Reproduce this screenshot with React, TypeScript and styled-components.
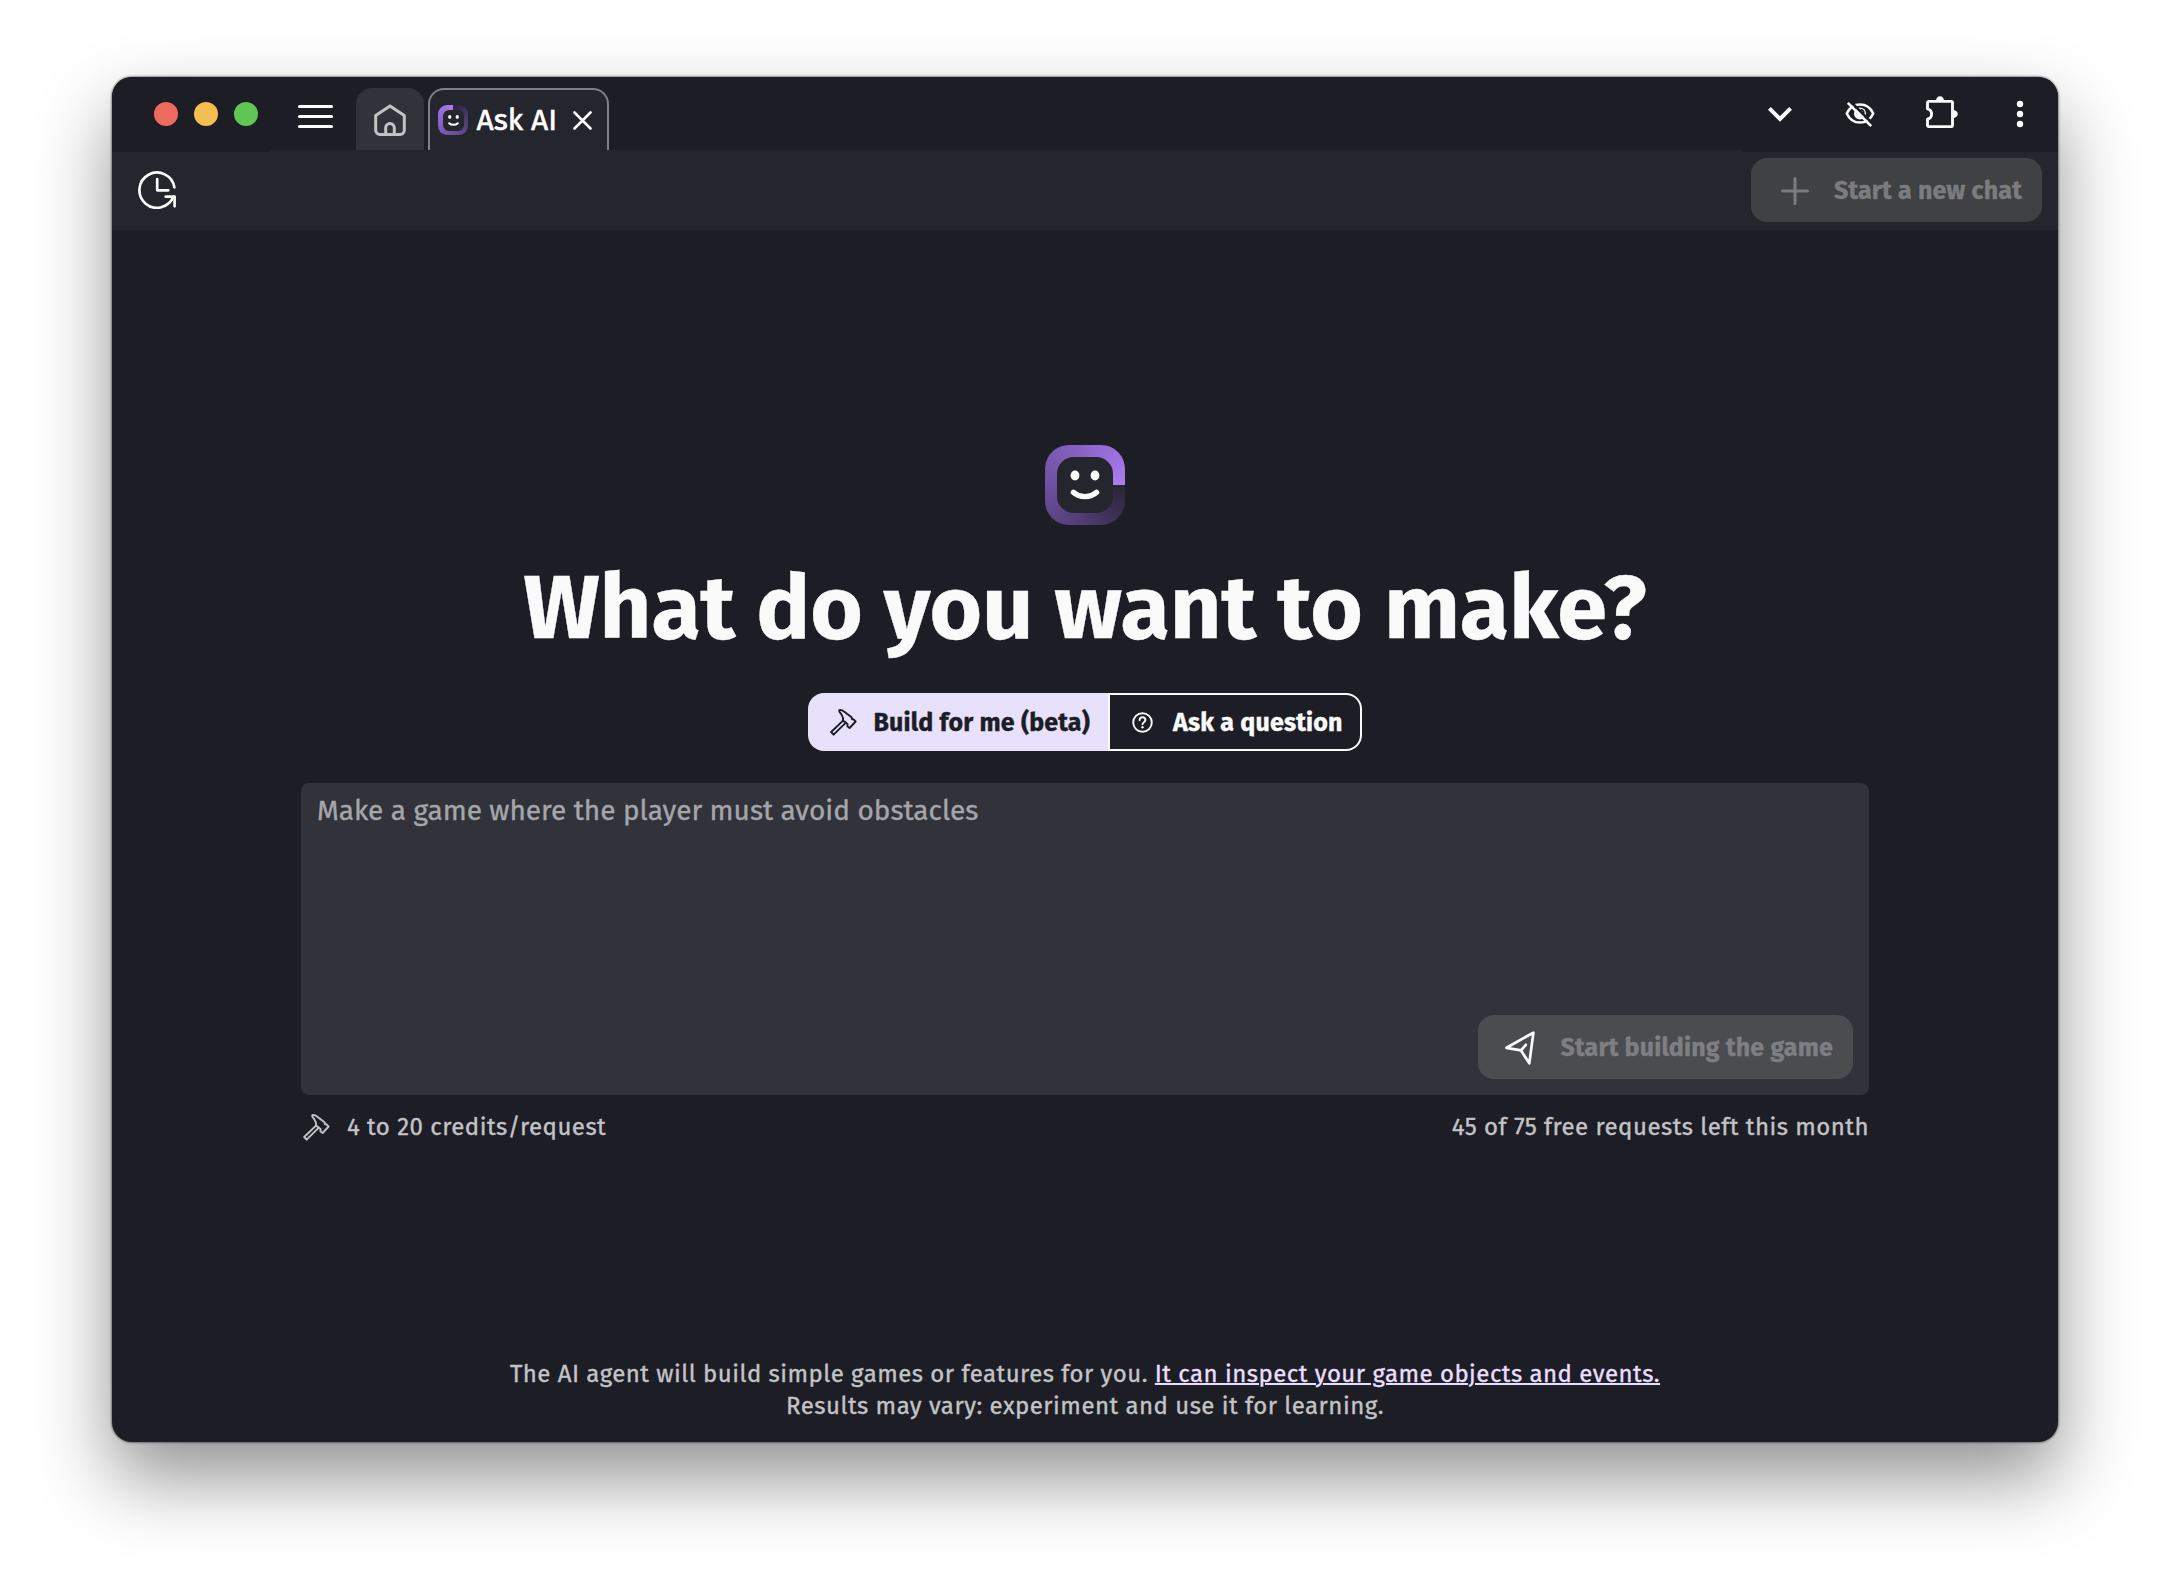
import React from 'react';
import styled, { createGlobalStyle } from 'styled-components';

const GlobalStyle = createGlobalStyle`
  * { box-sizing: border-box; }
  html, body { margin: 0; background: #fff; }
  body {
    font-family: "Fira Sans", "Noto Sans", sans-serif;
    color: #fafafa;
    -webkit-text-stroke: 0.35px currentColor;
  }
  button, textarea { font: inherit; border: 0; margin: 0; padding: 0; outline: none; }
`;

const Desktop = styled.div`
  width: 2170px;
  height: 1590px;
  padding: 77px 112px 0;
  overflow: hidden;
  background: #fff;
`;

const AppWindow = styled.div`
  width: 1946px;
  height: 1365px;
  display: flex;
  flex-direction: column;
  overflow: hidden;
  border-radius: 20px;
  background: #1d1d26;
  box-shadow: 0 36px 76px rgba(0, 0, 0, 0.43), 0 0 2px 1px rgba(0, 0, 0, 0.4);
`;

const TitleBar = styled.header`
  flex: none;
  display: flex;
  height: 75px;
  background: #1d1d26;
`;

const TrafficLights = styled.div`
  display: flex;
  align-items: center;
  gap: 16px;
  width: 158px;
  padding: 0 0 1px 41.5px;
`;

const Light = styled.span<{ $color: string }>`
  width: 24px;
  height: 24px;
  border-radius: 50%;
  background: ${(p) => p.$color};
`;

const TabStrip = styled.nav`
  flex: 1;
  display: flex;
  align-items: flex-end;
  padding-left: 28px;
  border-bottom: 2px solid #25252e;
`;

const MenuButton = styled.button`
  display: flex;
  flex-direction: column;
  gap: 7px;
  width: 35px;
  margin: 0 23px 22.5px 0;
  background: none;
`;

const MenuLine = styled.span`
  height: 3px;
  border-radius: 2px;
  background: #fff;
`;

const HomeTab = styled.button`
  display: flex;
  justify-content: center;
  width: 68px;
  height: 62px;
  margin-right: 4px;
  padding-top: 16px;
  border-radius: 16px 16px 0 0;
  background: #32323b;
`;

const ActiveTab = styled.div`
  display: flex;
  align-items: center;
  width: 181px;
  height: 62px;
  padding: 0 0 0 8px;
  border: 2px solid #808083;
  border-bottom: 0;
  border-radius: 16px 16px 0 0;
  background: #25252e;
`;

const TabTitle = styled.span`
  margin: 0 16px 0 8.5px;
  font-size: 30px;
  line-height: 36px;
  white-space: nowrap;
  color: #fff;
  -webkit-text-stroke-width: 0.6px;
`;

const WindowActions = styled.div`
  display: flex;
  align-items: center;
  width: 316px;
  padding: 0 0 1px 26px;
`;

const ActionSlot = styled.span<{ $width: number; $gap?: number; $lift?: number }>`
  display: flex;
  justify-content: center;
  width: ${(p) => p.$width}px;
  margin-right: ${(p) => p.$gap || 0}px;
  margin-bottom: ${(p) => p.$lift || 0}px;
`;

const Toolbar = styled.div`
  flex: none;
  display: flex;
  align-items: center;
  justify-content: space-between;
  height: 78px;
  padding: 0 16px 2px 26px;
  background: #25252e;
`;

const RaisedButton = styled.button<{ $bg: string; $fg: string; $gap: number; $left: number; $right: number }>`
  display: flex;
  align-items: center;
  gap: ${(p) => p.$gap}px;
  height: 64px;
  padding: 1px ${(p) => p.$right}px 0 ${(p) => p.$left}px;
  border-radius: 16px;
  background: ${(p) => p.$bg};
  color: ${(p) => p.$fg};
  font-size: 25px;
  font-weight: 700;
  line-height: 32px;
  letter-spacing: 0.18px;
  white-space: nowrap;
`;

const Main = styled.main`
  flex: 1;
  display: flex;
  flex-direction: column;
  align-items: center;
  padding: 215px 0 20px;
`;

const LogoFrame = styled.div<{ $size: number; $from: number }>`
  flex: none;
  width: ${(p) => p.$size}px;
  height: ${(p) => p.$size}px;
  padding: ${(p) => p.$size * 0.15}px;
  border-radius: 30%;
  background: conic-gradient(
    from ${(p) => p.$from}deg,
    #2a2535 0deg,
    #352c49 30deg,
    #4e3c71 90deg,
    #6f50a0 180deg,
    #8a64c8 270deg,
    #ab7df0 360deg
  );
`;

const LogoFace = styled.div`
  width: 100%;
  height: 100%;
  border-radius: 30%;
  background: #25252e;
  svg { display: block; width: 100%; height: 100%; }
`;

const Heading = styled.h1`
  margin: 29px 0 0;
  font-size: 90px;
  font-weight: 700;
  line-height: 108px;
  letter-spacing: -0.14px;
  white-space: nowrap;
  color: #fafafa;
`;

const ModeSwitch = styled.div`
  display: flex;
  height: 58px;
  margin-top: 31px;
`;

const Mode = styled.button<{ $active?: boolean }>`
  display: flex;
  align-items: center;
  gap: ${(p) => (p.$active ? 16.5 : 20)}px;
  width: ${(p) => (p.$active ? 300 : 254)}px;
  padding: 1px 0 0 ${(p) => (p.$active ? 20 : 22)}px;
  border: 2px solid ${(p) => (p.$active ? '#e8e1fc' : '#fafafa')};
  border-right-width: ${(p) => (p.$active ? 0 : 2)}px;
  border-radius: ${(p) => (p.$active ? '16px 0 0 16px' : '0 16px 16px 0')};
  background: ${(p) => (p.$active ? '#e8e1fc' : '#1d1d26')};
  color: ${(p) => (p.$active ? '#1d1d26' : '#fafafa')};
  font-size: 25px;
  font-weight: 700;
  line-height: 32px;
  letter-spacing: 0.18px;
  white-space: nowrap;
`;

const Composer = styled.div`
  display: flex;
  flex-direction: column;
  width: 1568px;
  height: 312px;
  margin-top: 32px;
  padding: 11px 16px 16px 16px;
  border-radius: 8px;
  background: #32323b;
`;

const Prompt = styled.textarea`
  flex: 1;
  resize: none;
  background: none;
  font-size: 28px;
  line-height: 34px;
  &::placeholder { color: #a6a6aa; opacity: 1; }
`;

const ComposerActions = styled.div`
  display: flex;
  justify-content: flex-end;
`;

const UsageRow = styled.div`
  display: flex;
  justify-content: space-between;
  width: 1568px;
  margin-top: 16px;
  font-size: 24px;
  line-height: 32px;
  letter-spacing: 0.48px;
  color: #c3c3c6;
`;

const Credits = styled.span`
  display: flex;
  align-items: center;
  gap: 17px;
  padding-left: 2px;
`;

const Disclaimer = styled.p`
  margin: auto 0 0;
  text-align: center;
  font-size: 24px;
  line-height: 32px;
  letter-spacing: 0.48px;
  color: #c3c3c6;
`;

const DocLink = styled.a`
  color: #e8dffe;
  text-decoration: underline;
  text-decoration-thickness: 2px;
  -webkit-text-stroke-color: #e8dffe;
`;

function AiLogo({ size, from }: { size: number; from: number }) {
  return (
    <LogoFrame $size={size} $from={from}>
      <LogoFace>
        <svg viewBox="0 0 56 56" fill="#fafafa">
          <ellipse cx="18" cy="18.5" rx="4.4" ry="5" />
          <ellipse cx="38" cy="18.5" rx="4.4" ry="5" />
          <path d="M16.4 35.3C22.5 41 33.5 41 39.6 35.3" fill="none" stroke="#fafafa" strokeWidth="5.4" strokeLinecap="round" />
        </svg>
      </LogoFace>
    </LogoFrame>
  );
}

function HammerIcon() {
  return (
    <svg width="27" height="27" viewBox="0 0 27 27" fill="none" stroke="currentColor" strokeWidth="1.9" strokeLinejoin="round" strokeLinecap="round">
      <path d="M9.3 1.2C11 .7 12.6 1.3 14 2.5L21.5 8.2L22 10.3L23.3 10.2L25.6 12.5L19.6 19L17.4 17.2L17.6 15.3L15.6 13.4L13 11.6C13.5 8.3 12.6 6.3 9.3 2.6Z" />
      <path d="M13 11.6L1.2 23L3.6 25.7L15.6 13.8" />
    </svg>
  );
}

function HomeIcon() {
  return (
    <svg width="32" height="32" viewBox="0 0 32 32" fill="none" stroke="#c3c3c6" strokeWidth="3" strokeLinejoin="round">
      <path d="M1.7 11.6L16 1.9L30.3 11.6V26.3A4.2 4.2 0 0 1 26.1 30.5H5.9A4.2 4.2 0 0 1 1.7 26.3Z" />
      <path d="M11.7 30V23.8A4.3 4.3 0 0 1 20.3 23.8V30" />
    </svg>
  );
}

function CloseIcon() {
  return (
    <svg width="19" height="19" viewBox="0 0 19 19" stroke="#fff" strokeWidth="2.6" strokeLinecap="round">
      <path d="M1.5 1.5L17.5 17.5M17.5 1.5L1.5 17.5" />
    </svg>
  );
}

function HistoryIcon() {
  return (
    <svg width="39" height="38" viewBox="0 0 39 38" fill="none" stroke="#fafafa" strokeWidth="2.7" strokeLinejoin="round" strokeLinecap="round">
      <path d="M36.4 16.4A17.6 17.6 0 1 0 35.4 25.6" />
      <path d="M27.7 25.7H36.6V35.3" />
      <path d="M19.2 8.2V19.3H30.3" />
    </svg>
  );
}

function ChevronIcon() {
  return (
    <svg width="24" height="15" viewBox="0 0 24 15" fill="none" stroke="#fafafa" strokeWidth="4">
      <path d="M1.4 1.4L12 12L22.6 1.4" />
    </svg>
  );
}

function EyeOffIcon() {
  return (
    <svg width="30" height="27" viewBox="0 0 30 27" fill="none" stroke="#fafafa">
      <path d="M1.8 12.4C4.4 6.6 9.2 3.4 15 3.4S25.6 6.6 28.2 12.4C25.6 18.2 20.8 21.6 15 21.6S4.4 18.2 1.8 12.4Z" strokeWidth="2.5" />
      <circle cx="15" cy="12.6" r="6" fill="#fafafa" stroke="none" />
      <path d="M15.6 8.6A4 4 0 0 1 19 12.2" stroke="#1d1d26" strokeWidth="1.5" />
      <path d="M5 0L28.5 23.5" stroke="#1d1d26" strokeWidth="2.6" />
      <path d="M2.8 1.8L26.2 25.2" strokeWidth="2.6" />
    </svg>
  );
}

function PuzzleIcon() {
  return (
    <svg width="32" height="32" viewBox="0 0 32 32" fill="none">
      <path d="M1.5 12.8V6.8A1.4 1.4 0 0 1 2.9 5.4H25.1A1.4 1.4 0 0 1 26.5 6.8V29.2A1.4 1.4 0 0 1 25.1 30.6H2.9A1.4 1.4 0 0 1 1.5 29.2V23.2C4 22.6 5.6 20.6 5.6 18S4 13.4 1.5 12.8Z" stroke="#fafafa" strokeWidth="2.9" strokeLinejoin="round" />
      <path d="M10 5A4 4.8 0 0 1 18 5ZM27 14A4.8 4 0 0 1 27 22Z" fill="#fafafa" />
    </svg>
  );
}

function MoreIcon() {
  return (
    <svg width="8" height="28" viewBox="0 0 8 28" fill="#fafafa">
      <circle cx="4" cy="4" r="3.2" />
      <circle cx="4" cy="14" r="3.2" />
      <circle cx="4" cy="24" r="3.2" />
    </svg>
  );
}

function PlusIcon() {
  return (
    <svg width="28" height="28" viewBox="0 0 28 28" stroke="#7c7c80" strokeWidth="3" strokeLinecap="round">
      <path d="M14 1.5V26.5M1.5 14H26.5" />
    </svg>
  );
}

function QuestionIcon() {
  return (
    <svg width="21" height="21" viewBox="0 0 21 21" fill="none" stroke="currentColor" strokeWidth="1.9" strokeLinecap="round">
      <circle cx="10.5" cy="10.5" r="9.3" />
      <path d="M7.6 8.3C7.6 6.5 8.8 5.3 10.5 5.3S13.4 6.5 13.4 8.1C13.4 10.2 10.5 10.2 10.5 12.3" />
      <circle cx="10.5" cy="15.3" r="1.2" fill="currentColor" stroke="none" />
    </svg>
  );
}

function SendIcon() {
  return (
    <svg width="30" height="34" viewBox="0 0 30 34" fill="none" stroke="#fafafa" strokeWidth="2.7" strokeLinejoin="round" strokeLinecap="round">
      <path d="M28.4 1.6L1.5 16.8L16 19.4L24.3 32.3Z" />
      <path d="M16 19.4L20.8 13.8" />
    </svg>
  );
}

export default function App() {
  return (
    <>
      <GlobalStyle />
      <Desktop>
        <AppWindow>
          <TitleBar>
            <TrafficLights>
              <Light $color="#ed6a5e" />
              <Light $color="#f5bf4f" />
              <Light $color="#61c554" />
            </TrafficLights>
            <TabStrip>
              <MenuButton aria-label="Menu">
                <MenuLine />
                <MenuLine />
                <MenuLine />
              </MenuButton>
              <HomeTab aria-label="Home">
                <HomeIcon />
              </HomeTab>
              <ActiveTab>
                <AiLogo size={30} from={0} />
                <TabTitle>Ask AI</TabTitle>
                <CloseIcon />
              </ActiveTab>
            </TabStrip>
            <WindowActions>
              <ActionSlot $width={24} $gap={53}><ChevronIcon /></ActionSlot>
              <ActionSlot $width={30} $gap={51}><EyeOffIcon /></ActionSlot>
              <ActionSlot $width={32} $gap={58} $lift={4}><PuzzleIcon /></ActionSlot>
              <ActionSlot $width={8}><MoreIcon /></ActionSlot>
            </WindowActions>
          </TitleBar>
          <Toolbar>
            <HistoryIcon />
            <RaisedButton $bg="#404144" $fg="#7c7c80" $gap={25.3} $left={30} $right={20}>
              <PlusIcon />
              Start a new chat
            </RaisedButton>
          </Toolbar>
          <Main>
            <AiLogo size={80} from={90} />
            <Heading>What do you want to make?</Heading>
            <ModeSwitch>
              <Mode $active>
                <HammerIcon />
                Build for me (beta)
              </Mode>
              <Mode>
                <QuestionIcon />
                Ask a question
              </Mode>
            </ModeSwitch>
            <Composer>
              <Prompt placeholder="Make a game where the player must avoid obstacles" />
              <ComposerActions>
                <RaisedButton $bg="#4b4c50" $fg="#7e7e84" $gap={26} $left={26.5} $right={20}>
                  <SendIcon />
                  Start building the game
                </RaisedButton>
              </ComposerActions>
            </Composer>
            <UsageRow>
              <Credits>
                <HammerIcon />
                4 to 20 credits/request
              </Credits>
              <span>45 of 75 free requests left this month</span>
            </UsageRow>
            <Disclaimer>
              The AI agent will build simple games or features for you.{' '}
              <DocLink>It can inspect your game objects and events.</DocLink>
              <br />
              Results may vary: experiment and use it for learning.
            </Disclaimer>
          </Main>
        </AppWindow>
      </Desktop>
    </>
  );
}
